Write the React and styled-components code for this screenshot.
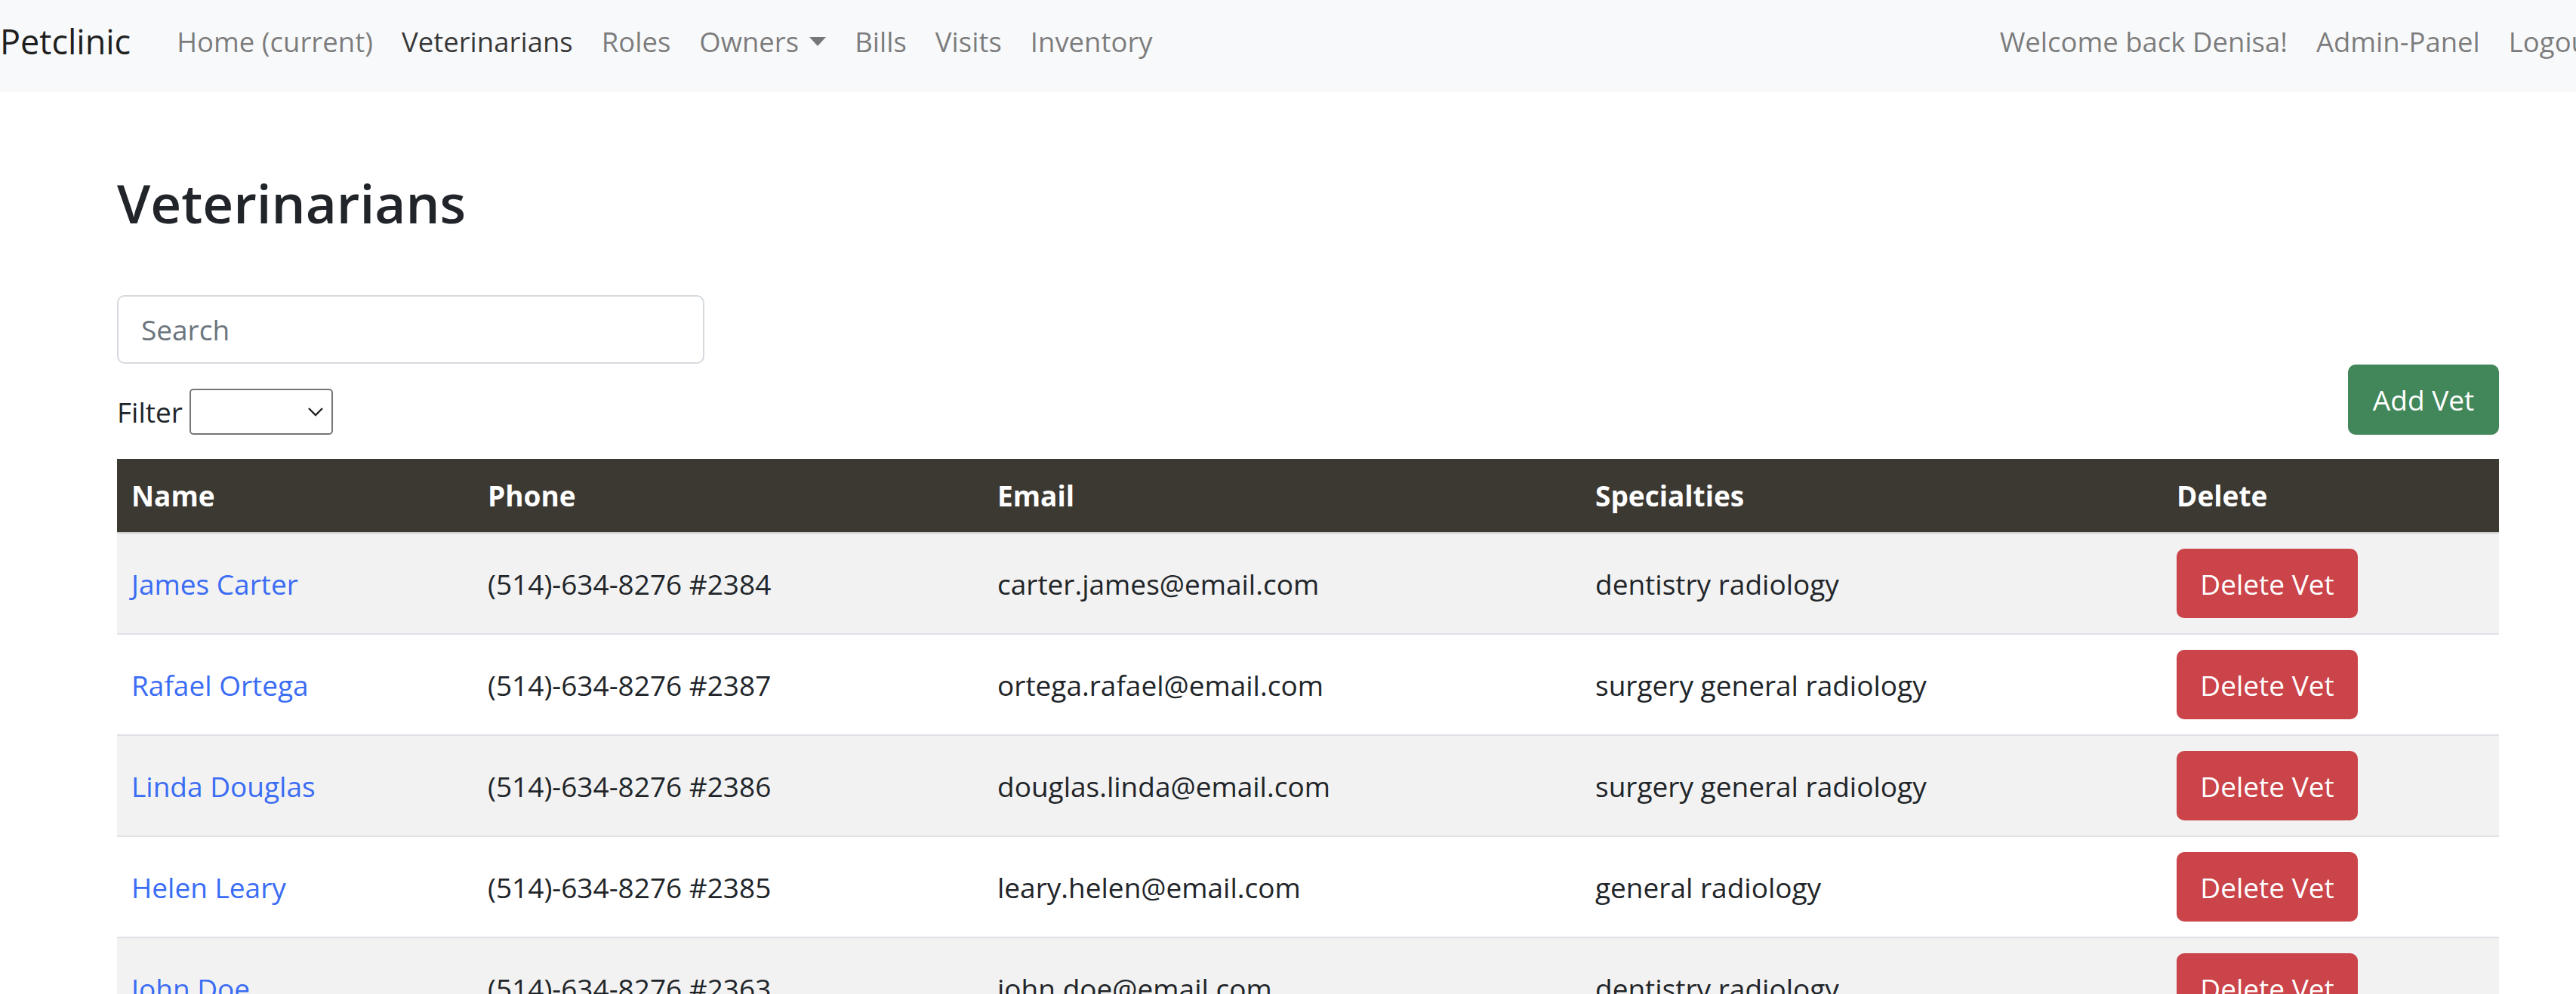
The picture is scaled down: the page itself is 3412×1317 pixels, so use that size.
import React from 'react';
import styled, { createGlobalStyle } from 'styled-components';

const GlobalStyle = createGlobalStyle`
  html, body {
    margin: 0;
    padding: 0;
    overflow-x: hidden;
    background: #fff;
    font-family: "Open Sans", "Noto Sans", sans-serif;
    color: #212529;
  }
  * { box-sizing: border-box; }
`;

const Navbar = styled.nav`
  display: flex;
  align-items: center;
  width: 3460px;
  height: 122px;
  padding-bottom: 12px;
  background-color: #f8f9fa;
`;

const Brand = styled.a`
  font-size: 45px;
  color: rgba(0, 0, 0, 0.9);
  text-decoration: none;
  margin-right: 42px;
  line-height: 1.5;
`;

const NavGroup = styled.div`
  display: flex;
  align-items: center;
  margin-left: ${(p) => (p.$right ? 'auto' : '0')};
`;

const NavLink = styled.a`
  font-size: 36.5px;
  padding: 0 19px;
  line-height: 1.5;
  text-decoration: none;
  color: ${(p) => (p.$active ? 'rgba(0, 0, 0, 0.78)' : 'rgba(0, 0, 0, 0.52)')};
  white-space: nowrap;
`;

const Caret = styled.span`
  display: inline-block;
  margin-left: 14px;
  vertical-align: 0.22em;
  border-top: 0.34em solid;
  border-right: 0.32em solid transparent;
  border-left: 0.32em solid transparent;
`;

const Main = styled.main`
  padding: 0 102px 0 155px;
`;

const Heading = styled.h1`
  font-size: 71px;
  font-weight: 600;
  line-height: 1.2;
  margin: 104px 0 80px;
  color: #212529;
`;

const Toolbar = styled.div`
  display: flex;
  justify-content: space-between;
  align-items: flex-end;
`;

const Controls = styled.div`
  display: flex;
  flex-direction: column;
  gap: 33px;
`;

const SearchInput = styled.input`
  width: 778px;
  height: 91px;
  border: 2px solid #d6dadf;
  border-radius: 10px;
  padding: 0 30px;
  font-family: inherit;
  font-size: 37px;
  color: #212529;
  outline: none;
  &::placeholder { color: #6c757d; }
`;

const FilterRow = styled.div`
  display: flex;
  align-items: center;
  font-size: 37px;
  gap: 9px;
`;

const SelectBox = styled.div`
  width: 190px;
  height: 61px;
  border: 2px solid #767676;
  border-radius: 5px;
  background: #fff;
  display: flex;
  align-items: center;
  justify-content: flex-end;
  padding-right: 10px;
`;

const Button = styled.button`
  border: none;
  border-radius: 10px;
  color: #fff;
  font-family: inherit;
  font-size: 37px;
  background-color: ${(p) => (p.$variant === 'danger' ? '#cb444a' : '#41875a')};
  width: ${(p) => (p.$variant === 'danger' ? '240px' : '200px')};
  height: ${(p) => (p.$variant === 'danger' ? '92px' : '93px')};
  padding: 0;
  cursor: pointer;
`;

const Table = styled.table`
  width: 100%;
  margin-top: 32px;
  border-collapse: collapse;
  table-layout: fixed;
  font-size: 37px;
`;

const HeadCell = styled.th`
  height: 98px;
  padding: 0 19px;
  text-align: left;
  font-weight: 700;
  color: #fff;
  background-color: #3c3933;
  border-bottom: 2px solid #cfcfcf;
`;

const Row = styled.tr`
  &:nth-child(odd) { background-color: #f2f2f2; }
`;

const Cell = styled.td`
  height: 134px;
  padding: 0 19px;
  vertical-align: middle;
  border-bottom: 2px solid #dee2e6;
  color: #212529;
  white-space: nowrap;
`;

const NameLink = styled.a`
  color: #3a6cf4;
  text-decoration: none;
`;

const vets = [
  { name: 'James Carter', phone: '(514)-634-8276 #2384', email: 'carter.james@email.com', spec: 'dentistry radiology' },
  { name: 'Rafael Ortega', phone: '(514)-634-8276 #2387', email: 'ortega.rafael@email.com', spec: 'surgery general radiology' },
  { name: 'Linda Douglas', phone: '(514)-634-8276 #2386', email: 'douglas.linda@email.com', spec: 'surgery general radiology' },
  { name: 'Helen Leary', phone: '(514)-634-8276 #2385', email: 'leary.helen@email.com', spec: 'general radiology' },
  { name: 'John Doe', phone: '(514)-634-8276 #2363', email: 'john.doe@email.com', spec: 'dentistry radiology' },
];

const columns = [472, 675, 792, 770, 446];

export default function App() {
  return (
    <>
      <GlobalStyle />
      <Navbar>
        <Brand href="#">Petclinic</Brand>
        <NavGroup>
          <NavLink href="#">Home (current)</NavLink>
          <NavLink href="#" $active>Veterinarians</NavLink>
          <NavLink href="#">Roles</NavLink>
          <NavLink href="#">Owners<Caret /></NavLink>
          <NavLink href="#">Bills</NavLink>
          <NavLink href="#">Visits</NavLink>
          <NavLink href="#">Inventory</NavLink>
        </NavGroup>
        <NavGroup $right>
          <NavLink href="#">Welcome back Denisa!</NavLink>
          <NavLink href="#">Admin-Panel</NavLink>
          <NavLink href="#">Logout</NavLink>
        </NavGroup>
      </Navbar>
      <Main>
        <Heading>Veterinarians</Heading>
        <Toolbar>
          <Controls>
            <SearchInput placeholder="Search" />
            <FilterRow>
              Filter
              <SelectBox>
                <svg width="22" height="13" viewBox="0 0 22 13" fill="none">
                  <path d="M2 2 L11 11 L20 2" stroke="#222" strokeWidth="2.4" />
                </svg>
              </SelectBox>
            </FilterRow>
          </Controls>
          <Button>Add Vet</Button>
        </Toolbar>
        <Table>
          <colgroup>
            {columns.map((w, i) => (
              <col key={i} style={{ width: w }} />
            ))}
          </colgroup>
          <thead>
            <tr>
              <HeadCell>Name</HeadCell>
              <HeadCell>Phone</HeadCell>
              <HeadCell>Email</HeadCell>
              <HeadCell>Specialties</HeadCell>
              <HeadCell>Delete</HeadCell>
            </tr>
          </thead>
          <tbody>
            {vets.map((v) => (
              <Row key={v.email}>
                <Cell><NameLink href="#">{v.name}</NameLink></Cell>
                <Cell>{v.phone}</Cell>
                <Cell>{v.email}</Cell>
                <Cell>{v.spec}</Cell>
                <Cell><Button $variant="danger">Delete Vet</Button></Cell>
              </Row>
            ))}
          </tbody>
        </Table>
      </Main>
    </>
  );
}
